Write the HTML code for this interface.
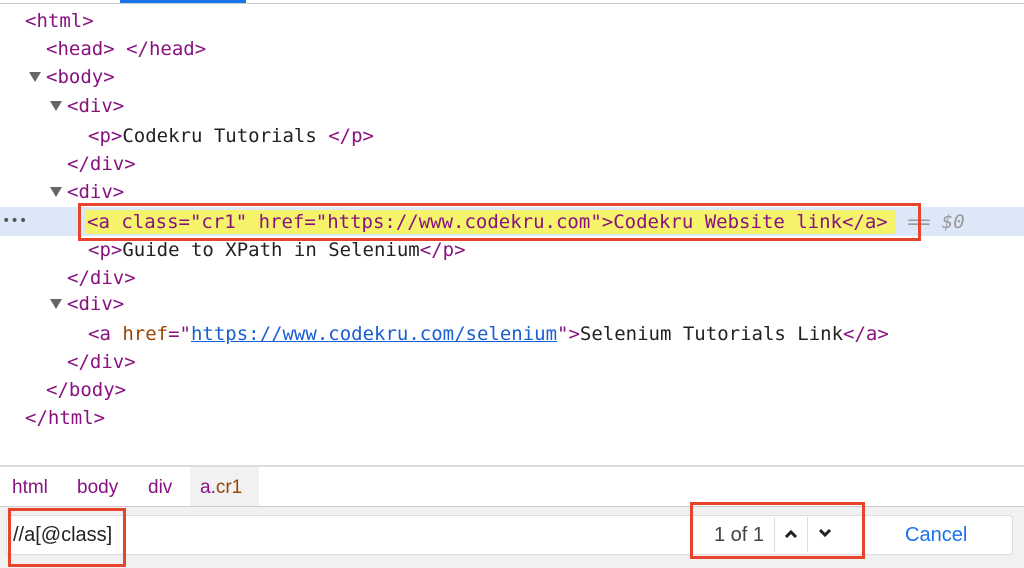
<!DOCTYPE html>
<html><head><meta charset="utf-8"><style>
body{margin:0;width:1024px;height:567px;background:#fff;position:relative;overflow:hidden;font-family:"DejaVu Sans Mono","Liberation Mono",monospace;}
.l{position:absolute;font-size:19px;line-height:28px;white-space:pre;color:#222;}
.t{color:#881280}.an{color:#994500}.av{color:#1a1aa6}
.tri{position:absolute;width:0;height:0;border-left:6px solid transparent;border-right:6px solid transparent;border-top:10px solid #666;}
.sans{font-family:"Liberation Sans",Arial,sans-serif;}
</style></head><body>
<div style="position:absolute;left:0;top:3px;width:1024px;height:1px;background:#ccc"></div>
<div style="position:absolute;left:120px;top:0;width:126px;height:3px;background:#1a73e8"></div>

<div class="l t" style="left:25px;top:7px">&lt;html&gt;</div>
<div class="l t" style="left:46px;top:35px">&lt;head&gt; &lt;/head&gt;</div>
<div class="tri" style="left:29px;top:72px"></div>
<div class="l t" style="left:46px;top:63px">&lt;body&gt;</div>
<div class="tri" style="left:50px;top:101px"></div>
<div class="l t" style="left:67px;top:92px">&lt;div&gt;</div>
<div class="l" style="left:88px;top:122px"><span class="t">&lt;p&gt;</span>Codekru Tutorials <span class="t">&lt;/p&gt;</span></div>
<div class="l t" style="left:67px;top:150px">&lt;/div&gt;</div>
<div class="tri" style="left:50px;top:187px"></div>
<div class="l t" style="left:67px;top:178px">&lt;div&gt;</div>

<div style="position:absolute;left:0;top:207px;width:1024px;height:29px;background:#dce7f7"></div>
<div style="position:absolute;left:85px;top:210px;width:810px;height:24px;background:#f4f36a;border-radius:2px"></div>
<div class="l" style="left:2px;top:207px;color:#555;font-size:14px">•••</div>
<div class="l t" style="left:87px;top:208px">&lt;a class="cr1" href="https://www.codekru.com"&gt;Codekru Website link&lt;/a&gt;</div>
<div class="l" style="left:896px;top:208px;color:#999"> == <i>$0</i></div>
<div style="position:absolute;left:78px;top:203px;width:837px;height:32px;border:3px solid #e8432d"></div>

<div class="l" style="left:88px;top:236px"><span class="t">&lt;p&gt;</span>Guide to XPath in Selenium<span class="t">&lt;/p&gt;</span></div>
<div class="l t" style="left:67px;top:264px">&lt;/div&gt;</div>
<div class="tri" style="left:50px;top:299px"></div>
<div class="l t" style="left:67px;top:290px">&lt;div&gt;</div>
<div class="l" style="left:88px;top:320px"><span class="t">&lt;a </span><span class="an">href</span><span class="t">="</span><span style="color:#1a5fd0;text-decoration:underline">https://www.codekru.com/selenium</span><span class="t">"&gt;</span>Selenium Tutorials Link<span class="t">&lt;/a&gt;</span></div>
<div class="l t" style="left:67px;top:348px">&lt;/div&gt;</div>
<div class="l t" style="left:46px;top:376px">&lt;/body&gt;</div>
<div class="l t" style="left:25px;top:404px">&lt;/html&gt;</div>

<div style="position:absolute;left:0;top:465px;width:1024px;height:2px;background:#ddd"></div>
<div style="position:absolute;left:190px;top:467px;width:69px;height:40px;background:#f1f1f1"></div>
<div class="sans" style="position:absolute;left:12px;top:477px;font-size:19px;color:#881280">html</div>
<div class="sans" style="position:absolute;left:77px;top:477px;font-size:19px;color:#881280">body</div>
<div class="sans" style="position:absolute;left:148px;top:477px;font-size:19px;color:#881280">div</div>
<div class="sans" style="position:absolute;left:200px;top:477px;font-size:19px;color:#881280">a.<span style="color:#994500">cr1</span></div>
<div style="position:absolute;left:0;top:506px;width:1024px;height:61px;background:#f1f1f1;border-top:1px solid #ccc"></div>
<div style="position:absolute;left:6px;top:515px;width:1005px;height:38px;background:#fff;border:1px solid #ddd;border-radius:4px"></div>
<div class="sans" style="position:absolute;left:13px;top:524px;font-size:20px;color:#222">//a[@class]</div>
<div class="sans" style="position:absolute;left:714px;top:524px;font-size:20px;color:#444">1 of 1</div>
<div style="position:absolute;left:774px;top:517px;width:1px;height:35px;background:#ddd"></div>
<div style="position:absolute;left:807px;top:517px;width:1px;height:35px;background:#ddd"></div>
<svg style="position:absolute;left:783px;top:528px" width="16" height="12"><path d="M3 9 L8 4 L13 9" stroke="#222" stroke-width="3" fill="none"/></svg>
<svg style="position:absolute;left:817px;top:527px" width="16" height="12"><path d="M3 3 L8 8 L13 3" stroke="#222" stroke-width="3" fill="none"/></svg>
<div class="sans" style="position:absolute;left:905px;top:524px;font-size:20px;color:#1a73e8">Cancel</div>
<div style="position:absolute;left:8px;top:508px;width:112px;height:53px;border:3px solid #e8432d"></div>
<div style="position:absolute;left:690px;top:502px;width:169px;height:51px;border:3px solid #e8432d"></div>
</body></html>
